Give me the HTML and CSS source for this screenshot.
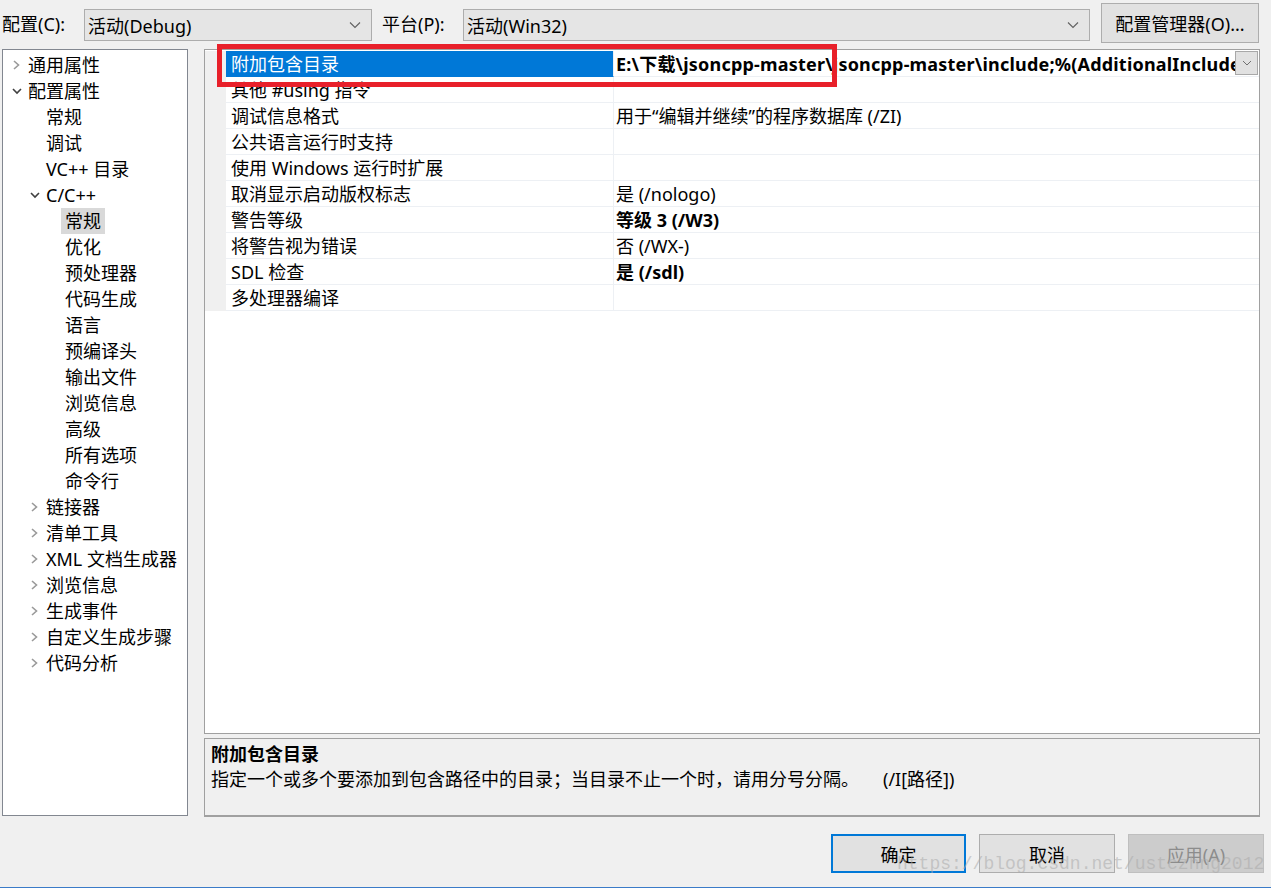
FILE: index.html
```html
<!DOCTYPE html>
<html lang="zh-CN">
<head>
<meta charset="utf-8">
<title>属性页</title>
<link rel="stylesheet" href="styles.css">
</head>
<body>
<div class="frame">
  <div class="topbar">
    <span class="lbl lbl-cfg">配置(C):</span>
    <div class="combo combo-cfg"><span>活动(Debug)</span><svg class="chev" width="12" height="8" viewBox="0 0 12 8"><polyline points="1,1.5 6,6.5 11,1.5" fill="none" stroke="#606060" stroke-width="1.1"/></svg></div>
    <span class="lbl lbl-plat">平台(P):</span>
    <div class="combo combo-plat"><span>活动(Win32)</span><svg class="chev" width="12" height="8" viewBox="0 0 12 8"><polyline points="1,1.5 6,6.5 11,1.5" fill="none" stroke="#606060" stroke-width="1.1"/></svg></div>
    <button class="btn btn-mgr">配置管理器(O)...</button>
  </div>

  <div class="main">
    <div class="tree">
      <div class="ti l0"><span class="tw"><svg width="8" height="10" viewBox="0 0 8 10"><polyline points="2,1 6.5,5 2,9" fill="none" stroke="#9a9a9a" stroke-width="1.6"/></svg></span><span class="tl">通用属性</span></div>
      <div class="ti l0"><span class="tw"><svg width="10" height="8" viewBox="0 0 10 8"><polyline points="1,2 5,6 9,2" fill="none" stroke="#404040" stroke-width="1.6"/></svg></span><span class="tl">配置属性</span></div>
      <div class="ti l1"><span class="tw"></span><span class="tl">常规</span></div>
      <div class="ti l1"><span class="tw"></span><span class="tl">调试</span></div>
      <div class="ti l1"><span class="tw"></span><span class="tl">VC++ 目录</span></div>
      <div class="ti l1"><span class="tw"><svg width="10" height="8" viewBox="0 0 10 8"><polyline points="1,2 5,6 9,2" fill="none" stroke="#404040" stroke-width="1.6"/></svg></span><span class="tl">C/C++</span></div>
      <div class="ti l2"><span class="tw"></span><span class="tl sel">常规</span></div>
      <div class="ti l2"><span class="tw"></span><span class="tl">优化</span></div>
      <div class="ti l2"><span class="tw"></span><span class="tl">预处理器</span></div>
      <div class="ti l2"><span class="tw"></span><span class="tl">代码生成</span></div>
      <div class="ti l2"><span class="tw"></span><span class="tl">语言</span></div>
      <div class="ti l2"><span class="tw"></span><span class="tl">预编译头</span></div>
      <div class="ti l2"><span class="tw"></span><span class="tl">输出文件</span></div>
      <div class="ti l2"><span class="tw"></span><span class="tl">浏览信息</span></div>
      <div class="ti l2"><span class="tw"></span><span class="tl">高级</span></div>
      <div class="ti l2"><span class="tw"></span><span class="tl">所有选项</span></div>
      <div class="ti l2"><span class="tw"></span><span class="tl">命令行</span></div>
      <div class="ti l1"><span class="tw"><svg width="8" height="10" viewBox="0 0 8 10"><polyline points="2,1 6.5,5 2,9" fill="none" stroke="#9a9a9a" stroke-width="1.6"/></svg></span><span class="tl">链接器</span></div>
      <div class="ti l1"><span class="tw"><svg width="8" height="10" viewBox="0 0 8 10"><polyline points="2,1 6.5,5 2,9" fill="none" stroke="#9a9a9a" stroke-width="1.6"/></svg></span><span class="tl">清单工具</span></div>
      <div class="ti l1"><span class="tw"><svg width="8" height="10" viewBox="0 0 8 10"><polyline points="2,1 6.5,5 2,9" fill="none" stroke="#9a9a9a" stroke-width="1.6"/></svg></span><span class="tl">XML 文档生成器</span></div>
      <div class="ti l1"><span class="tw"><svg width="8" height="10" viewBox="0 0 8 10"><polyline points="2,1 6.5,5 2,9" fill="none" stroke="#9a9a9a" stroke-width="1.6"/></svg></span><span class="tl">浏览信息</span></div>
      <div class="ti l1"><span class="tw"><svg width="8" height="10" viewBox="0 0 8 10"><polyline points="2,1 6.5,5 2,9" fill="none" stroke="#9a9a9a" stroke-width="1.6"/></svg></span><span class="tl">生成事件</span></div>
      <div class="ti l1"><span class="tw"><svg width="8" height="10" viewBox="0 0 8 10"><polyline points="2,1 6.5,5 2,9" fill="none" stroke="#9a9a9a" stroke-width="1.6"/></svg></span><span class="tl">自定义生成步骤</span></div>
      <div class="ti l1"><span class="tw"><svg width="8" height="10" viewBox="0 0 8 10"><polyline points="2,1 6.5,5 2,9" fill="none" stroke="#9a9a9a" stroke-width="1.6"/></svg></span><span class="tl">代码分析</span></div>
    </div>

    <div class="right">
      <div class="grid">
        <div class="rows">
          <div class="row selrow"><div class="mg"></div><div class="nm">附加包含目录</div><div class="vl bold"><span class="vt">E:\下载\jsoncpp-master\jsoncpp-master\include;%(AdditionalIncludeDirectories)</span><span class="ddb"><svg width="10" height="6" viewBox="0 0 10 6"><polyline points="1,1 5,5 9,1" fill="none" stroke="#707070" stroke-width="1"/></svg></span></div></div>
          <div class="row"><div class="mg"></div><div class="nm">其他 #using 指令</div><div class="vl"></div></div>
          <div class="row"><div class="mg"></div><div class="nm">调试信息格式</div><div class="vl">用于“编辑并继续”的程序数据库 (/ZI)</div></div>
          <div class="row"><div class="mg"></div><div class="nm">公共语言运行时支持</div><div class="vl"></div></div>
          <div class="row"><div class="mg"></div><div class="nm">使用 Windows 运行时扩展</div><div class="vl"></div></div>
          <div class="row"><div class="mg"></div><div class="nm">取消显示启动版权标志</div><div class="vl">是 (/nologo)</div></div>
          <div class="row"><div class="mg"></div><div class="nm">警告等级</div><div class="vl bold">等级 3 (/W3)</div></div>
          <div class="row"><div class="mg"></div><div class="nm">将警告视为错误</div><div class="vl">否 (/WX-)</div></div>
          <div class="row"><div class="mg"></div><div class="nm">SDL 检查</div><div class="vl bold">是 (/sdl)</div></div>
          <div class="row"><div class="mg"></div><div class="nm">多处理器编译</div><div class="vl"></div></div>
        </div>
        <div class="redbox"></div>
      </div>
      <div class="desc">
        <div class="desc-title">附加包含目录</div>
        <div class="desc-text"><span>指定一个或多个要添加到包含路径中的目录；当目录不止一个时，请用分号分隔。</span><span class="desc-sw">(/I[路径])</span></div>
      </div>
    </div>
  </div>

  <div class="footer">
    <button class="btn fbtn ok">确定</button>
    <button class="btn fbtn">取消</button>
    <button class="btn fbtn dis">应用(A)</button>
    <span class="wm">https://blog.csdn.net/ustczhng2012</span>
  </div>
</div>
</body>
</html>
```
FILE: styles.css
```css
* { box-sizing: border-box; }
html, body { margin: 0; padding: 0; }
body {
  background: #f0f0f0;
  font-family: "Noto Sans", "Noto Sans CJK SC", sans-serif;
  font-size: 18px;
  color: #000;
}
.frame {
  width: 1271px;
  height: 888px;
  border-bottom: 1px solid #3a7bc8;
  display: flex;
  flex-direction: column;
  overflow: hidden;
}
.topbar {
  height: 49px;
  display: flex;
  align-items: flex-start;
  padding-left: 2px;
}
.lbl { line-height: 26px; margin-top: 11px; }
.lbl-cfg { width: 82px; }
.lbl-plat { width: 81px; margin-left: 10px; }
.combo {
  margin-top: 9px;
  height: 32px;
  background: #e5e5e5;
  border: 1px solid #adadad;
  display: flex;
  align-items: center;
  justify-content: space-between;
  padding: 0 10px 0 3px;
}
.combo-cfg { width: 288px; }
.combo-plat { width: 627px; }
.btn {
  font-family: inherit;
  font-size: 18px;
  color: #000;
  background: #e1e1e1;
  border: 1px solid #adadad;
  padding: 0;
  display: flex;
  align-items: center;
  justify-content: center;
}
.btn-mgr {
  margin-top: 3px;
  margin-left: 11px;
  width: 158px;
  height: 40px;
}
.main {
  display: flex;
  padding: 0 0 0 2px;
  height: 768px;
}
.tree {
  width: 186px;
  height: 767px;
  background: #fff;
  border: 1px solid #828790;
  padding-top: 2px;
  padding-left: 0;
}
.ti {
  height: 26px;
  display: flex;
  align-items: center;
  white-space: nowrap;
}
.ti.l0 { padding-left: 6px; }
.ti.l1 { padding-left: 24px; }
.ti.l2 { padding-left: 43px; }
.tw {
  width: 19px;
  height: 26px;
  display: flex;
  align-items: center;
  padding-left: 3px;
}
.tl {
  height: 26px;
  line-height: 26px;
  padding: 0 4px;
  margin-left: -4px;
}
.tl.sel { background: #d9d9d9; }
.right {
  margin-left: 16px;
  width: 1056px;
  display: flex;
  flex-direction: column;
  gap: 4px;
}
.grid {
  position: relative;
  height: 685px;
  background: #fff;
  border: 1px solid #a0a0a0;
  padding-top: 1px;
}
.row {
  display: flex;
  height: 26px;
}
.mg {
  width: 21px;
  background: #f0f0f0;
  flex-shrink: 0;
}
.nm {
  width: 388px;
  flex-shrink: 0;
  padding: 1px 0 0 5px;
  line-height: 24px;
  border-bottom: 1px solid #edf0f4;
  border-right: 1px solid #edf0f4;
  white-space: nowrap;
}
.selrow .nm {
  background: #0078d7;
  color: #fff;
  border-bottom-color: #0078d7;
}
.vl {
  flex: 1;
  min-width: 0;
  padding: 1px 0 0 2px;
  line-height: 24px;
  border-bottom: 1px solid #edf0f4;
  white-space: nowrap;
  display: flex;
  align-items: flex-start;
}
.bold { font-weight: bold; }
.vt {
  flex: 1;
  min-width: 0;
  overflow: hidden;
  letter-spacing: 0.2px;
}
.ddb {
  width: 23px;
  height: 24px;
  margin: -1px 1px 0 0;
  background: #e1e1e1;
  border: 1px solid #a8a8a8;
  display: flex;
  align-items: center;
  justify-content: center;
  flex-shrink: 0;
}
.redbox {
  position: absolute;
  left: 12px;
  top: -6px;
  width: 620px;
  height: 43px;
  border: 5px solid #e8202a;
}
.desc {
  height: 79px;
  background: #f0f0f0;
  border: 1px solid #a0a0a0;
  border-bottom-width: 2px;
  padding: 3px 0 0 6px;
}
.desc-title {
  font-weight: bold;
  line-height: 24px;
}
.desc-text {
  line-height: 26px;
  display: flex;
}
.desc-sw { margin-left: 24px; }
.footer {
  position: relative;
  display: flex;
  justify-content: flex-end;
  gap: 13px;
  padding: 17px 7px 0 0;
}
.fbtn {
  width: 136px;
  height: 39px;
}
.fbtn.ok {
  width: 135px;
  border: 2px solid #0078d7;
}
.fbtn.dis {
  background: #cccccc;
  border-color: #bfbfbf;
  color: #8c8c8c;
}
.wm {
  position: absolute;
  left: 897px;
  top: 37px;
  font-family: "Liberation Mono", monospace;
  font-size: 18px;
  color: rgba(170, 170, 170, 0.55);
  white-space: nowrap;
  letter-spacing: 0;
}
```
